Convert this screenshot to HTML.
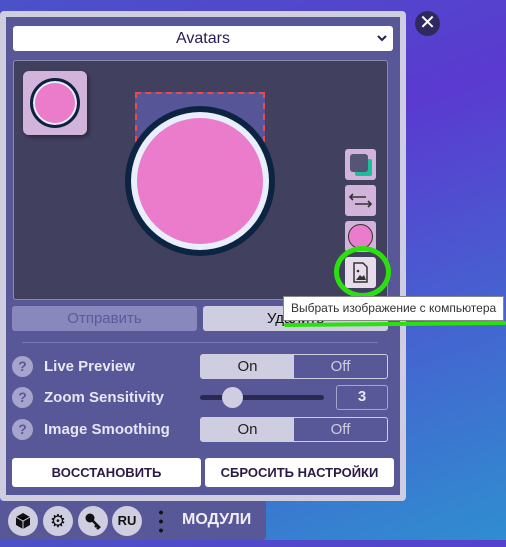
<!DOCTYPE html>
<html><head><meta charset="utf-8"><style>
*{box-sizing:border-box;margin:0;padding:0}
body{width:506px;height:540px;overflow:hidden;position:relative;font-family:"Liberation Sans","DejaVu Sans",sans-serif;
background:linear-gradient(160deg,#4b52c8 0%,#5a3ad0 35%,#4a5ad0 60%,#2f8ed0 100%)}
.abs{position:absolute}
.outer{left:0;top:11px;width:406px;height:490px;background:#cfcde0;border-radius:4px}
.inner{left:6px;top:17px;width:394px;height:478px;background:#585898}
.sel{left:13px;top:26px;width:380px;height:25px;background:#fff;border-radius:3px;text-align:center;font-size:16px;line-height:25px;color:#2a1a55}
.canvas{left:13px;top:60px;width:375px;height:240px;background:#41405e;border:1px solid #8a8ab0;border-radius:3px}
.sb{width:31px;height:31px;background:#d2b4da;border-radius:3px;left:345px}
.btn{height:25px;border-radius:3px;text-align:center;font-size:15px;line-height:25px}
.lbl{left:44px;color:#e8e6f5;font-weight:bold;font-size:15px}
.q{left:12px;width:21px;height:21px;border-radius:50%;background:#a6a4cc;color:#585898;font-weight:bold;font-size:14px;text-align:center;line-height:21px}
.tg{left:200px;width:188px;height:25px;border:1px solid #cfcde0;border-radius:3px;display:flex;font-size:15px}
.tg div{flex:1;text-align:center;line-height:23px}
.ic{top:506px;width:30px;height:30px;border-radius:50%;background:#cfcde0;text-align:center;line-height:30px;font-weight:bold;font-size:13px;color:#111}
</style></head><body>
<div class="abs outer"></div>
<div class="abs inner"></div>
<div class="abs" style="left:415px;top:11px;width:25px;height:25px;border-radius:50%;background:#2e2a60;color:#fff;text-align:center;line-height:25px;font-size:20px;font-weight:bold">✕</div>
<div class="abs sel">Avatars<svg class="abs" style="right:6px;top:9px" width="10" height="7"><path d="M1 1l4 4 4-4" stroke="#2a1a55" stroke-width="2" fill="none"/></svg></div>
<div class="abs canvas"></div>
<div class="abs" style="left:23px;top:71px;width:64px;height:64px;background:#d2b4da;border-radius:6px;box-shadow:2px 2px 4px rgba(0,0,0,.4)"></div>
<div class="abs" style="left:30px;top:78px;width:50px;height:50px;border-radius:50%;background:#eb7bcb;border:3px solid #0e2040;box-shadow:inset 0 0 0 2px #e8eefa"></div>
<div class="abs" style="left:135px;top:92px;width:130px;height:50px;background:#555598;border:2px dashed #f04848;border-bottom:none"></div>
<div class="abs" style="left:125px;top:106px;width:150px;height:150px;border-radius:50%;background:#0c2442"></div>
<div class="abs" style="left:131px;top:112px;width:138px;height:138px;border-radius:50%;background:#e8eefa"></div>
<div class="abs" style="left:137px;top:118px;width:126px;height:126px;border-radius:50%;background:#eb7bcb"></div>
<div class="abs sb" style="top:149px"><div class="abs" style="left:10px;top:10px;width:17px;height:17px;background:#1dbf9a;border-radius:2px"></div><div class="abs" style="left:5px;top:5px;width:18px;height:18px;background:#555575;border-radius:3px"></div></div>
<div class="abs sb" style="top:185px"><svg width="31" height="31"><g stroke="#333" stroke-width="1.6" fill="none"><path d="M5 12h16M8 9l-3 3 3 3M10 19h16M23 16l3 3-3 3"/></g></svg></div>
<div class="abs sb" style="top:221px"><div class="abs" style="left:3px;top:3px;width:25px;height:25px;border-radius:50%;background:#eb7bcb;border:1.5px solid #333"></div></div>
<div class="abs sb" style="top:257px;background:#e8dcec"><svg width="31" height="31"><g stroke="#333" stroke-width="1.5" fill="none"><path d="M9 6h9l4 4v15H9z"/></g><circle cx="13" cy="14" r="1.3" fill="#333"/><path d="M11 23l4-5 2 2 2-2 2 5z" fill="#333"/></svg></div>
<div class="abs" style="left:334px;top:246px;width:57px;height:52px;border:5px solid #2ce010;border-radius:50%"></div>
<div class="abs btn" style="left:12px;top:306px;width:185px;background:#8888bc;color:#5a5a9c">Отправить</div>
<div class="abs btn" style="left:203px;top:306px;width:185px;background:#cfcde0;color:#111">Удалить</div>
<div class="abs" style="left:283px;top:296px;width:221px;height:25px;background:#fff;border:1px solid #888;font-size:12px;line-height:23px;padding-left:7px;color:#333">Выбрать изображение с компьютера</div>
<div class="abs" style="left:284px;top:322px;width:222px;height:4px;background:#2ce010;border-radius:2px;transform:rotate(-0.5deg)"></div>
<div class="abs" style="left:22px;top:342px;width:356px;height:1px;background:#7a7ab4"></div>
<div class="abs q" style="top:356px">?</div><div class="abs lbl" style="top:358px">Live Preview</div>
<div class="abs tg" style="top:354px"><div style="background:#cfcde0;color:#222">On</div><div style="color:#cfcde0">Off</div></div>
<div class="abs q" style="top:387px">?</div><div class="abs lbl" style="top:389px">Zoom Sensitivity</div>
<div class="abs" style="left:200px;top:395px;width:124px;height:5px;background:#2a2a50;border-radius:3px"></div>
<div class="abs" style="left:222px;top:387px;width:21px;height:21px;border-radius:50%;background:#cfcde0"></div>
<div class="abs" style="left:336px;top:385px;width:52px;height:25px;border:1.5px solid #a6a4cc;border-radius:3px;color:#e8e6f5;font-weight:bold;text-align:center;line-height:22px;font-size:15px">3</div>
<div class="abs q" style="top:419px">?</div><div class="abs lbl" style="top:421px">Image Smoothing</div>
<div class="abs tg" style="top:417px"><div style="background:#cfcde0;color:#222">On</div><div style="color:#cfcde0">Off</div></div>
<div class="abs btn" style="left:12px;top:458px;width:189px;height:29px;line-height:29px;background:#fff;color:#2a1a45;font-weight:bold;font-size:13px">ВОССТАНОВИТЬ</div>
<div class="abs btn" style="left:205px;top:458px;width:189px;height:29px;line-height:29px;background:#fff;color:#2a1a45;font-weight:bold;font-size:13px">СБРОСИТЬ НАСТРОЙКИ</div>
<div class="abs" style="left:0;top:501px;width:266px;height:39px;background:#585898;border-radius:0 0 4px 0"></div>
<div class="abs ic" style="left:8px"><svg width="30" height="30"><path d="M15 7l7 4v8l-7 4-7-4v-8z" fill="#111"/><path d="M8 11l7 4 7-4M15 15v8" stroke="#cfcde0" stroke-width="1"/></svg></div>
<div class="abs ic" style="left:43px;font-size:18px">⚙</div>
<div class="abs ic" style="left:78px"><svg width="30" height="30"><circle cx="12" cy="12" r="4.5" fill="#111"/><path d="M14 14l8 8M19 19l-2 2M21 21l-2 2" stroke="#111" stroke-width="2.5"/></svg></div>
<div class="abs ic" style="left:112px">RU</div>
<div class="abs" style="left:159px;top:508px;width:4px;height:26px;background:radial-gradient(circle,#111 1.8px,transparent 2px) 0 0/4px 9px repeat-y"></div>
<div class="abs" style="left:182px;top:511px;color:#f0eef8;font-weight:bold;font-size:16px">МОДУЛИ</div>
</body></html>
